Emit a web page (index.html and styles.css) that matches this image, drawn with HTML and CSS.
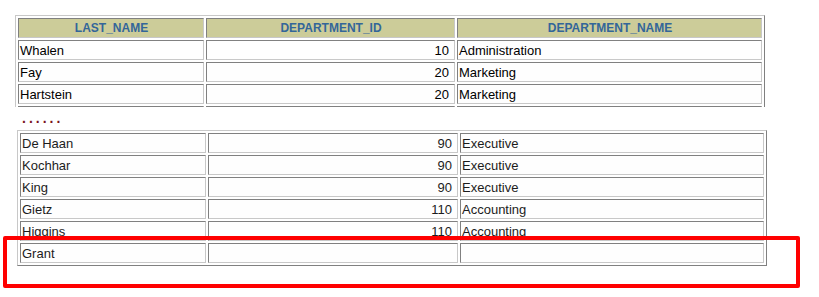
FILE: index.html
```html
<!DOCTYPE html>
<html>
<head>
<meta charset="utf-8">
<link rel="stylesheet" href="styles.css">
</head>
<body>
<div class="page">
  <div class="clip">
    <table class="grid grid-top">
      <colgroup><col class="c1"><col class="c2"><col class="c3"></colgroup>
      <thead>
        <tr><th>LAST_NAME</th><th>DEPARTMENT_ID</th><th>DEPARTMENT_NAME</th></tr>
      </thead>
      <tbody>
        <tr><td>Whalen</td><td class="num">10</td><td>Administration</td></tr>
        <tr><td>Fay</td><td class="num">20</td><td>Marketing</td></tr>
        <tr><td>Hartstein</td><td class="num">20</td><td>Marketing</td></tr>
        <tr><td></td><td class="num"></td><td></td></tr>
      </tbody>
    </table>
  </div>
  <div class="dots">......</div>
  <table class="grid grid-bottom">
    <colgroup><col class="c1"><col class="c2b"><col class="c3"></colgroup>
    <tbody>
      <tr><td>De Haan</td><td class="num">90</td><td>Executive</td></tr>
      <tr><td>Kochhar</td><td class="num">90</td><td>Executive</td></tr>
      <tr><td>King</td><td class="num">90</td><td>Executive</td></tr>
      <tr><td>Gietz</td><td class="num">110</td><td>Accounting</td></tr>
      <tr><td>Higgins</td><td class="num">110</td><td>Accounting</td></tr>
      <tr><td>Grant</td><td class="num"></td><td></td></tr>
    </tbody>
  </table>
  <div class="highlight"></div>
</div>
</body>
</html>
```
FILE: styles.css
```css
html, body {
  margin: 0;
  padding: 0;
  background: #ffffff;
}
.page {
  position: relative;
  width: 819px;
  height: 297px;
  padding-top: 15px;
  box-sizing: border-box;
  font-family: "Liberation Sans", Arial, sans-serif;
}
.clip {
  margin-left: 15px;
  height: 92px;
  overflow: hidden;
}
.grid {
  border-collapse: separate;
  border-spacing: 2px;
  border: 1px solid;
  border-color: #c8c8c8 #808080 #808080 #c8c8c8;
  table-layout: fixed;
  width: 750px;
}
.grid-bottom {
  margin-left: 17px;
}
.c1 { width: 186px; }
.c2 { width: 249px; }
.c2b { width: 250px; }
.grid th, .grid td {
  height: 18px;
  padding: 0 0 0 1px;
  line-height: 18px;
  border: 1px solid;
  border-color: #808080 #c8c8c8 #c8c8c8 #808080;
  white-space: nowrap;
  overflow: hidden;
}
.grid th {
  background: #cccc99;
  color: #336699;
  font-size: 12px;
  font-weight: bold;
  text-align: center;
}
.grid td {
  box-sizing: border-box;
  height: 20px;
  padding-top: 1px;
  line-height: 17px;
  background: #fefefe;
  color: #000;
  font-size: 13px;
  text-align: left;
}
.grid td.num {
  text-align: right;
  padding-right: 5px;
}
.grid-bottom td {
  color: #1c1c1c;
}
.dots {
  height: 19px;
  padding-top: 4px;
  margin-left: 22px;
  font-size: 14px;
  font-weight: bold;
  letter-spacing: 3px;
  line-height: 14px;
  color: #7a1420;
}
.highlight {
  position: absolute;
  left: 3px;
  top: 236px;
  width: 797px;
  height: 52px;
  box-sizing: border-box;
  border: 4px solid #ff0000;
  border-radius: 2px;
}
```
